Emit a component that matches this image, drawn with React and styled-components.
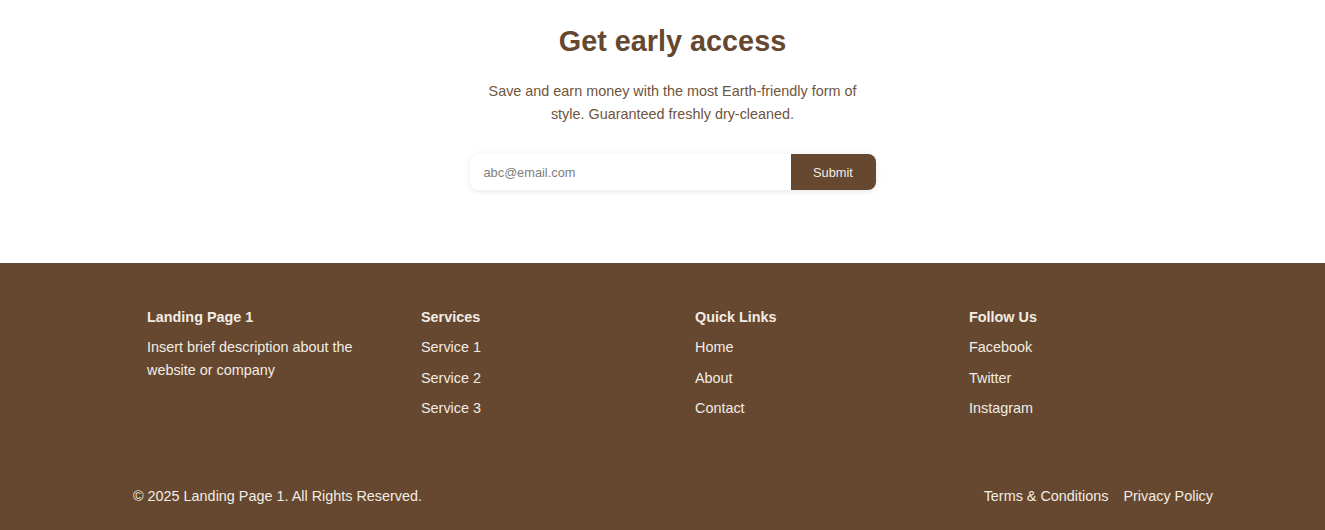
import React from "react";
import styled, { createGlobalStyle } from "styled-components";

const Global = createGlobalStyle`
  html, body { margin: 0; padding: 0; background: #ffffff; overflow: hidden; }
  body { font-family: "Liberation Sans", Arial, sans-serif; }
  * { box-sizing: border-box; }
`;

const BROWN = "#65482f";
const LIGHT = "#f3ece4";

const Page = styled.div`
  display: flex;
  flex-direction: column;
  width: 1345px;
  min-height: 530px;
`;

const Hero = styled.section`
  display: flex;
  flex-direction: column;
  align-items: center;
  padding: 24px 0 73px;
`;

const Title = styled.h2`
  margin: 0;
  font-size: 28.8px;
  line-height: 34px;
  font-weight: 700;
  color: ${BROWN};
`;

const Lead = styled.p`
  margin: 22px 0 0;
  width: 390px;
  text-align: center;
  font-size: 14.4px;
  line-height: 23px;
  color: #6e5540;
`;

const Form = styled.form`
  margin-top: 28px;
  display: flex;
  width: 406px;
  height: 36px;
  border-radius: 8px;
  box-shadow: 0 1px 6px rgba(0, 0, 0, 0.1);
  background: #fff;
`;

const Input = styled.input`
  flex: 1;
  border: none;
  outline: none;
  background: transparent;
  padding: 0 14px;
  font-family: inherit;
  font-size: 12.8px;
  color: #333;
  border-radius: 8px 0 0 8px;
  &::placeholder { color: #7d7d7d; }
`;

const Button = styled.button`
  width: 85px;
  border: none;
  background: ${BROWN};
  color: ${LIGHT};
  font-family: inherit;
  font-size: 12.8px;
  border-radius: 0 8px 8px 0;
  cursor: pointer;
`;

const Footer = styled.footer`
  flex: 1;
  background: ${BROWN};
  color: ${LIGHT};
  padding: 45px 0 0;
`;

const Columns = styled.div`
  display: grid;
  grid-template-columns: repeat(4, 274px);
  padding-left: 147px;
`;

const Col = styled.div`
  display: flex;
  flex-direction: column;
`;

const ColTitle = styled.h4`
  margin: 0 0 10px;
  font-size: 14.4px;
  line-height: 18px;
  font-weight: 700;
`;

const Desc = styled.p`
  margin: 0;
  width: 230px;
  font-size: 14.4px;
  line-height: 23px;
`;

const LinkList = styled.ul`
  list-style: none;
  margin: 0;
  padding: 0;
  display: flex;
  flex-direction: column;
  gap: 8.5px;
`;

const FLink = styled.a`
  color: ${LIGHT};
  text-decoration: none;
  font-size: 14.4px;
  line-height: 22px;
  display: block;
`;

const Bottom = styled.div`
  display: flex;
  justify-content: space-between;
  align-items: center;
  padding: 0 132px 0 133px;
  margin-top: 66px;
  font-size: 14.4px;
  line-height: 18px;
`;

const Legal = styled.div`
  display: flex;
  gap: 15px;
`;

const cols = [
  { title: "Services", links: ["Service 1", "Service 2", "Service 3"] },
  { title: "Quick Links", links: ["Home", "About", "Contact"] },
  { title: "Follow Us", links: ["Facebook", "Twitter", "Instagram"] },
];

export default function App() {
  return (
    <Page>
      <Global />
      <Hero>
        <Title>Get early access</Title>
        <Lead>
          Save and earn money with the most Earth-friendly form of style.
          Guaranteed freshly dry-cleaned.
        </Lead>
        <Form onSubmit={(e) => e.preventDefault()}>
          <Input type="email" placeholder="abc@email.com" />
          <Button type="submit">Submit</Button>
        </Form>
      </Hero>
      <Footer>
        <Columns>
          <Col>
            <ColTitle>Landing Page 1</ColTitle>
            <Desc>Insert brief description about the website or company</Desc>
          </Col>
          {cols.map((c) => (
            <Col key={c.title}>
              <ColTitle>{c.title}</ColTitle>
              <LinkList>
                {c.links.map((l) => (
                  <li key={l}>
                    <FLink href="#">{l}</FLink>
                  </li>
                ))}
              </LinkList>
            </Col>
          ))}
        </Columns>
        <Bottom>
          <span>© 2025 Landing Page 1. All Rights Reserved.</span>
          <Legal>
            <FLink href="#">Terms &amp; Conditions</FLink>
            <FLink href="#">Privacy Policy</FLink>
          </Legal>
        </Bottom>
      </Footer>
    </Page>
  );
}
